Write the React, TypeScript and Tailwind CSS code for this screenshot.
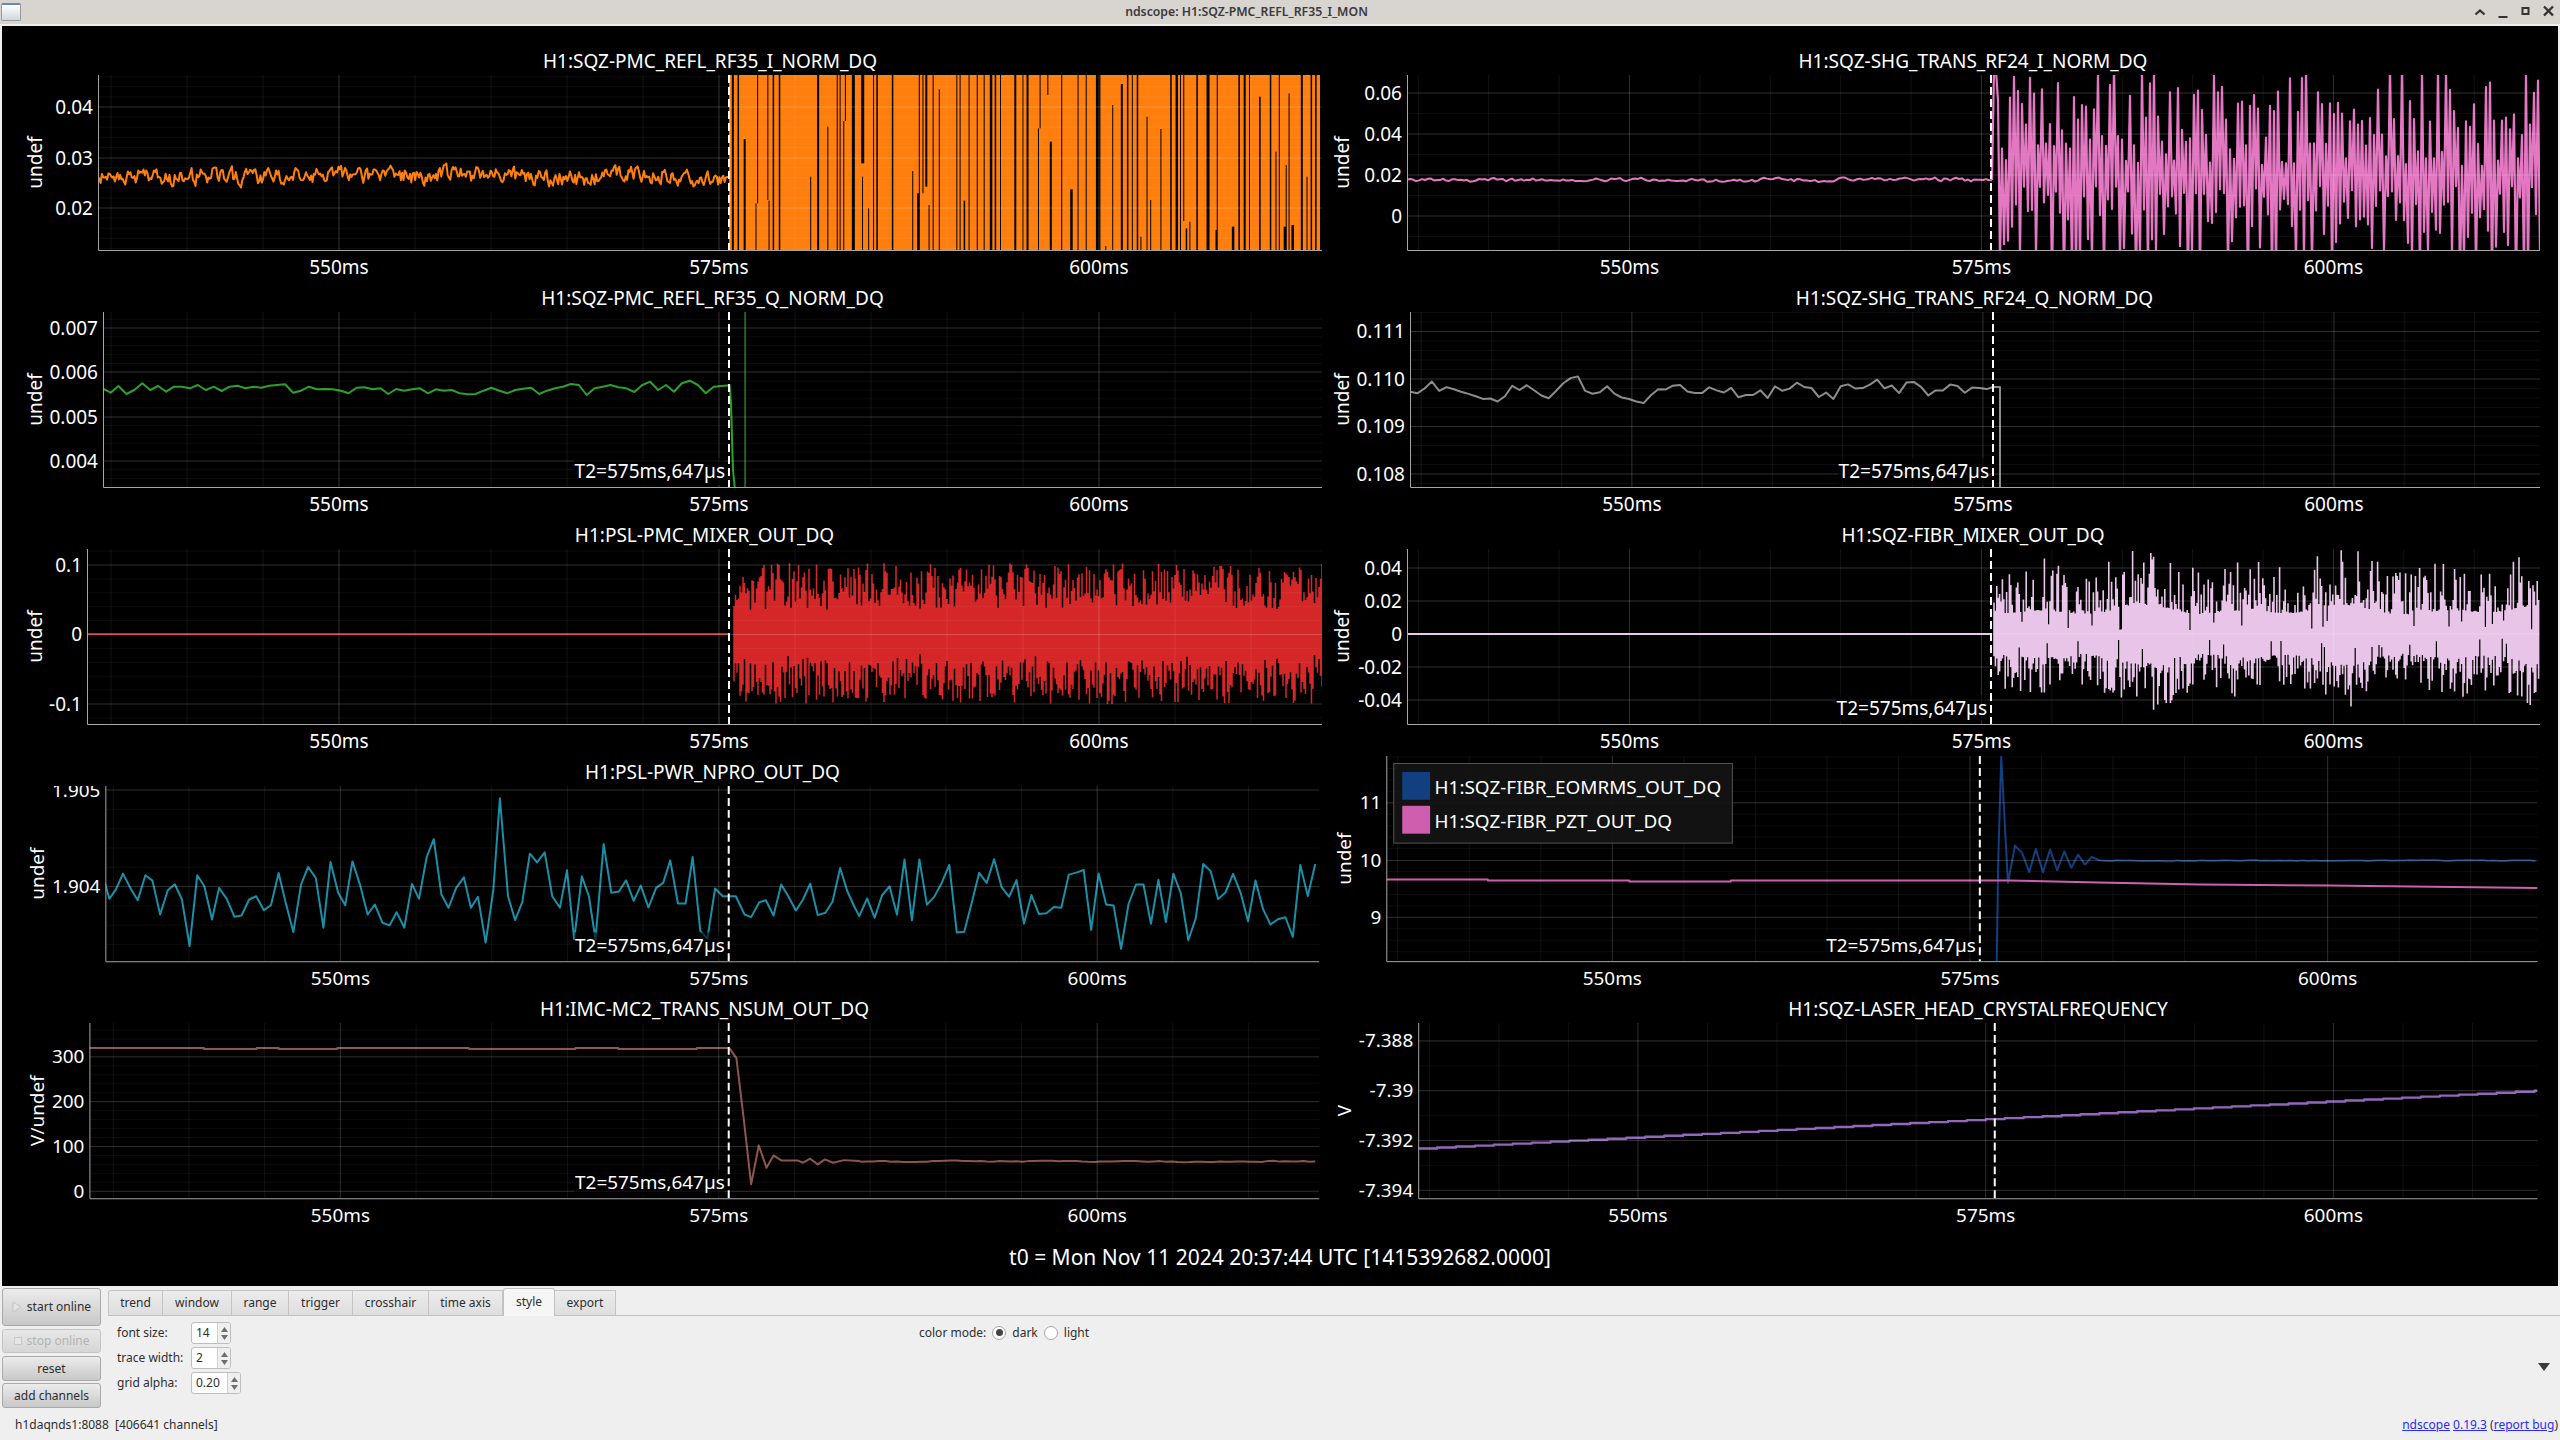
import { ReactNode } from 'react'

const RIGHT_EDGE = { left: 1322, right: 2540 }

// seeded so every run draws the same noise
function makeRandom(seed: number) {
  let a = seed
  return () => {
    a = (a + 0x6d2b79f5) | 0
    let t = Math.imul(a ^ (a >>> 15), 1 | a)
    t = (t + Math.imul(t ^ (t >>> 7), 61 | t)) ^ t
    return ((t ^ (t >>> 14)) >>> 0) / 4294967296
  }
}

function line(points: number[][]) {
  return points.map((p, i) => `${i ? 'L' : 'M'}${p[0].toFixed(1)} ${p[1].toFixed(1)}`).join('')
}

function noisy(x0: number, x1: number, step: number, cy: number, amp: number, seed: number) {
  const rand = makeRandom(seed)
  const pts: number[][] = []
  let v = 0
  let slow = 0
  for (let x = x0; x <= x1; x += step) {
    v = 0.45 * v + (rand() - 0.5) * 1.3
    slow = 0.97 * slow + (rand() - 0.5) * 0.16
    pts.push([x, cy + (v + slow) * amp])
  }
  return pts
}

function bars(
  x0: number,
  x1: number,
  step: number,
  cy: number,
  seed: number,
  amount: (rand: () => number, x: number) => [number, number],
) {
  const rand = makeRandom(seed)
  let d = ''
  for (let x = x0; x <= x1; x += step) {
    const [up, down] = amount(rand, x)
    d += `M${x.toFixed(1)} ${(cy - up).toFixed(1)}V${(cy + down).toFixed(1)}`
  }
  return d
}

// black gaps in the orange block, read off the reference: x, width, top, bottom
const ORANGE_GAPS = [
  [78, 2], [92, 1.5], [107, 2, 237], [136, 1, 430], [140, 1, 45, 430], [165, 1, 45, 420], [168, 1, 422], [178, 1.5],
  [193, 1.5], [270, 1, 350], [287, 2], [312, 1, 200], [335, 1], [342, 1], [351, 1, 183], [355, 1, 45, 183], [372, 3],
  [395, 3, 45, 310], [397, 1, 350], [412, 1, 445], [424, 1], [432, 1.5], [470, 1.5], [520, 1, 333], [532, 2, 400],
  [536, 1], [552, 2, 45, 380], [545, 1, 45, 400], [560, 1, 435], [570, 1], [585, 1, 88], [628, 1], [636, 1], [646, 1.5, 422],
  [658, 1], [678, 1], [695, 1], [710, 2.5], [722, 1.5], [735, 1], [770, 2], [790, 1], [800, 2], [828, 1, 205], [832, 1, 45, 205],
  [851, 1, 45, 105], [857, 2, 245], [885, 1], [907, 2.5, 388], [925, 1], [945, 1], [970, 4.5], [993, 1, 558], [1010, 1, 135],
  [1031, 2, 72], [1046, 1.5], [1058, 1], [1070, 1.5], [1079, 1, 530], [1094, 1, 170], [1103, 1, 420], [1128, 1, 207], [1152, 1.5],
  [1165, 2.5], [1176, 1], [1184, 1, 45, 483], [1190, 1.5, 505], [1199, 1, 485], [1216, 1.5], [1241, 3], [1263, 1.5, 510],
  [1266, 1], [1303, 2.5, 500], [1319, 1.5], [1332, 2], [1345, 1], [1370, 1.5, 110], [1396, 1.5], [1410, 1, 275], [1418, 1], [1430, 2.5, 500],
  [1435, 1, 315], [1442, 1, 100], [1449, 2.5, 495], [1472, 2], [1486, 1, 350], [1496, 1.5], [1507, 1.5],
]

const P2_Y = [
  1165, 1178, 1158, 1182, 1170, 1150, 1170, 1158, 1175, 1160, 1160, 1165, 1155, 1170, 1160, 1173, 1160, 1157, 1165, 1160, 1163,
  1157, 1155, 1153, 1178, 1172, 1160, 1168, 1167, 1168, 1172, 1180, 1163, 1162, 1168, 1165, 1182, 1167, 1172, 1168, 1165, 1180,
  1168, 1172, 1170, 1180, 1183, 1182, 1172, 1163, 1172, 1180, 1170, 1166, 1163, 1182, 1172, 1165, 1160, 1152, 1155, 1185, 1165,
  1160, 1155, 1162, 1165, 1176, 1155, 1145, 1170, 1155, 1175, 1150, 1142, 1155, 1180, 1160, 1158, 1156,
]

const P4_ZOOM = [
  [187, 430], [195, 478], [207, 450], [220, 402], [235, 450], [247, 482], [261, 407], [274, 423], [288, 525], [302, 452], [315, 434],
  [328, 480], [342, 620], [356, 407], [369, 440], [383, 540], [396, 445], [410, 478], [424, 532], [437, 528], [451, 480], [464, 470],
  [478, 512], [491, 497], [505, 400], [518, 490], [532, 578], [546, 435], [559, 382], [573, 415], [587, 565], [600, 367], [614, 460],
  [627, 497], [640, 365], [654, 435], [668, 525], [681, 495], [695, 550], [708, 558], [721, 518], [735, 565], [749, 433], [762, 478],
  [776, 352], [789, 298], [803, 465], [816, 505], [830, 445], [844, 413], [857, 505], [870, 472], [884, 610], [898, 452], [910, 175],
  [925, 470], [938, 542], [951, 488], [965, 342], [978, 368], [992, 338], [1006, 470], [1020, 505], [1033, 392], [1046, 600], [1060, 410],
  [1073, 470], [1085, 600], [1100, 313], [1114, 460], [1128, 456], [1141, 422], [1155, 484], [1168, 438], [1182, 504], [1196, 445],
  [1209, 430], [1222, 362], [1236, 492], [1250, 492], [1263, 352], [1277, 575], [1290, 597], [1304, 447], [1318, 470], [1330, 470],
  [1342, 470], [1358, 525], [1370, 533], [1385, 488], [1397, 482], [1411, 528], [1425, 435], [1438, 470], [1452, 513], [1465, 480],
  [1478, 432], [1492, 527], [1506, 520], [1519, 487], [1533, 385], [1546, 455], [1560, 505], [1568, 530],
]

function p4Points() {
  const pts = P4_ZOOM.map(([x, y]) => [x / 1.823, 740 + y / 3])
  const rand = makeRandom(44)
  for (let x = 868; x <= 1322; x += 7.5) {
    const r = rand()
    pts.push([x, 896 + (r - 0.5) * 74 + (rand() < 0.18 ? (rand() - 0.45) * 60 : 0)])
  }
  return pts
}

function Stroke({ d, color, width = 2 }: { d: string; color: string; width?: number }) {
  return <path d={d} fill="none" stroke={color} strokeWidth={width} strokeLinejoin="round" />
}

type Plot = {
  title?: string
  titleClass?: string
  left: number
  top: number
  height: number
  column: 'left' | 'right'
  unit: string
  ticks: [string, number][]
  spacing: number
  minors: number
  cursor: number
  t2?: boolean
  traces: ReactNode
  overlay?: ReactNode
}

const PLOTS: Plot[] = [
  {
    title: 'H1:SQZ-PMC_REFL_RF35_I_NORM_DQ',
    titleClass: 'ml-[96px] w-[1224px]',
    left: 98,
    top: 75,
    height: 175,
    column: 'left',
    unit: 'undef',
    ticks: [['0.04', 107], ['0.03', 158], ['0.02', 208]],
    spacing: 50.5,
    minors: 5,
    cursor: 729,
    traces: (
      <>
        <Stroke d={line(noisy(98, 729, 1.3, 177, 11, 11))} color="#ff7f0e" width={2} />
        <rect x={729} y={75} width={591} height={175} fill="#ff7f0e" />
        {ORANGE_GAPS.map(([x, w, y0 = 45, y1 = 570]) => (
          <rect key={`${x}-${y0}`} x={700 + x / 2.45} y={60 + y0 / 3} width={w} height={(y1 - y0) / 3} fill="#000" />
        ))}
      </>
    ),
  },
  {
    title: 'H1:SQZ-SHG_TRANS_RF24_I_NORM_DQ',
    titleClass: 'ml-[85px] w-[1132px]',
    left: 1407,
    top: 75,
    height: 175,
    column: 'right',
    unit: 'undef',
    ticks: [['0.06', 93], ['0.04', 134], ['0.02', 175], ['0', 216]],
    spacing: 41,
    minors: 2,
    cursor: 1991,
    traces: (() => {
      const rand = makeRandom(5)
      const pts: number[][] = [[1992, 180], [1994, 70], [1996, 70]]
      let sign = 1
      for (let x = 1998; x <= 2540; x += 2) {
        sign = -sign
        const r = rand()
        pts.push([x, 176 + sign * (10 + 100 * Math.pow(r, 1.15))])
      }
      return (
        <>
          <Stroke d={line(noisy(1407, 1992, 3, 180, 2.6, 21))} color="#e377c2" />
          <Stroke d={line(pts)} color="#e377c2" width={2.2} />
        </>
      )
    })(),
  },
  {
    title: 'H1:SQZ-PMC_REFL_RF35_Q_NORM_DQ',
    titleClass: 'ml-[101px] w-[1219px]',
    left: 103,
    top: 312,
    height: 175,
    column: 'left',
    unit: 'undef',
    ticks: [['0.007', 328], ['0.006', 372], ['0.005', 417], ['0.004', 461]],
    spacing: 44.3,
    minors: 5,
    cursor: 729,
    t2: true,
    traces: (() => {
      const step = (1330 - 187) / (P2_Y.length - 1)
      const pts = P2_Y.map((y, i) => [(187 + i * step) / 1.823, y / 3])
      pts.push([731, 404], [733, 470], [735, 490])
      return (
        <>
          <Stroke d={line(pts)} color="#2ca02c" />
          <rect x={744.5} y={312} width={1.2} height={175} fill="#2ca02c" />
        </>
      )
    })(),
  },
  {
    title: 'H1:SQZ-SHG_TRANS_RF24_Q_NORM_DQ',
    titleClass: 'ml-[88px] w-[1129px]',
    left: 1410,
    top: 312,
    height: 175,
    column: 'right',
    unit: 'undef',
    ticks: [['0.111', 331.5], ['0.110', 379], ['0.109', 426.5], ['0.108', 474]],
    spacing: 47.5,
    minors: 5,
    cursor: 1993,
    t2: true,
    traces: (
      <Stroke
        d={line([...noisy(1410, 1993, 7.3, 388, 13, 31), [1993, 387], [2000, 387], [2000, 490]])}
        color="#8c8c8c"
      />
    ),
  },
  {
    title: 'H1:PSL-PMC_MIXER_OUT_DQ',
    titleClass: 'ml-[85px] w-[1235px]',
    left: 87,
    top: 549,
    height: 175,
    column: 'left',
    unit: 'undef',
    ticks: [['0.1', 565], ['0', 634.5], ['-0.1', 704]],
    spacing: 69.5,
    minors: 5,
    cursor: 729,
    traces: (
      <>
        <Stroke d="M87 634H730" color="#d62728" />
        <Stroke
          d={bars(734, 1322, 1.5, 634, 3, (rand) => {
            const deep = rand() < 0.1
            return [
              deep ? 24 + rand() * 20 : 26 + 45 * Math.pow(rand(), 0.95),
              deep ? 20 + rand() * 20 : 24 + 46 * Math.pow(rand(), 0.85),
            ]
          })}
          color="#d62728"
          width={1.5}
        />
      </>
    ),
  },
  {
    title: 'H1:SQZ-FIBR_MIXER_OUT_DQ',
    titleClass: 'ml-[85px] w-[1132px]',
    left: 1407,
    top: 549,
    height: 175,
    column: 'right',
    unit: 'undef',
    ticks: [['0.04', 568], ['0.02', 601], ['0', 634], ['-0.02', 667], ['-0.04', 700]],
    spacing: 33,
    minors: 1,
    cursor: 1991,
    t2: true,
    traces: (
      <>
        <Stroke d="M1407 634H1992" color="#e8c4e8" />
        <Stroke
          d={bars(1994, 2540, 1.4, 634, 17, (rand, x) => {
            const env = 0.9 + 0.22 * Math.sin(x / 21) * Math.sin(x / 67 + 1)
            const a = rand()
            const b = rand()
            return [
              env * (a < 0.06 ? 4 + a * 200 : 26 + 58 * Math.pow(rand(), 2.4)),
              env * (b < 0.06 ? 4 + b * 200 : 26 + 46 * Math.pow(rand(), 2)),
            ]
          })}
          color="#e8c4e8"
          width={1.6}
        />
      </>
    ),
  },
  {
    title: 'H1:PSL-PWR_NPRO_OUT_DQ',
    titleClass: 'ml-[101px] w-[1219px]',
    left: 103,
    top: 786,
    height: 176,
    column: 'left',
    unit: 'undef',
    ticks: [['1.905', 790], ['1.904', 887]],
    spacing: 97,
    minors: 5,
    cursor: 729,
    t2: true,
    traces: <Stroke d={line(p4Points())} color="#1a8fa8" />,
  },
  {
    left: 1384,
    top: 756,
    height: 206,
    column: 'right',
    unit: 'undef',
    ticks: [['11', 803], ['10', 861], ['9', 918]],
    spacing: 57.5,
    minors: 5,
    cursor: 1980,
    t2: true,
    traces: (() => {
      const zoom = [
        [1366, 680], [1369, 360], [1375, 50], [1388, 430], [1402, 318], [1416, 340], [1430, 398], [1443, 328], [1457, 398],
        [1471, 330], [1485, 392], [1499, 335], [1513, 385], [1526, 345], [1540, 375], [1553, 352], [1568, 362],
      ]
      const blue = [...zoom.map(([x, y]) => [1300 + x / 1.96, 740 + y / 3]), ...noisy(2106, 2540, 6, 861, 0.8, 61)]
      return (
        <>
          <Stroke d={line(blue)} color="#123f80" />
          <Stroke d="M1384 880H1486V881H1628V882H1730V881H2010L2100 883L2200 885L2330 886L2540 888.5" color="#cf5fae" />
        </>
      )
    })(),
    overlay: (
      <>
        <rect x={1391.5} y={763.5} width={340} height={80} fill="#141414" fillOpacity={0.9} stroke="#555" />
        <rect x={1400} y={772} width={28} height={28} fill="#123f80" />
        <rect x={1400} y={806} width={28} height={28} fill="#cf5fae" />
        <text x={1432.5} y={794} fill="#fff">H1:SQZ-FIBR_EOMRMS_OUT_DQ</text>
        <text x={1432.5} y={828.5} fill="#fff">H1:SQZ-FIBR_PZT_OUT_DQ</text>
      </>
    ),
  },
  {
    title: 'H1:IMC-MC2_TRANS_NSUM_OUT_DQ',
    titleClass: 'ml-[85px] w-[1235px]',
    left: 87,
    top: 1023,
    height: 176,
    column: 'left',
    unit: 'V/undef',
    ticks: [['300', 1057], ['200', 1102], ['100', 1147], ['0', 1192]],
    spacing: 45,
    minors: 5,
    cursor: 729,
    t2: true,
    traces: (() => {
      const zoom = [
        [1330, 925], [1343, 955], [1356, 1130], [1370, 1335], [1384, 1218], [1398, 1285], [1411, 1248], [1425, 1263], [1455, 1263],
        [1465, 1270], [1478, 1258], [1492, 1275], [1505, 1260], [1520, 1270], [1540, 1262], [1568, 1265],
      ]
      const after = [...zoom.map(([x, y]) => [x / 1.823, 740 + y / 3]), ...noisy(862, 1322, 6, 1162, 0.9, 71)]
      return (
        <Stroke
          d={`M87 1048H202V1049H255V1048H277V1049H336V1048H468V1049H575V1048H618V1049H697V1048H729${line(after).replace('M', 'L')}`}
          color="#8c564b"
        />
      )
    })(),
  },
  {
    title: 'H1:SQZ-LASER_HEAD_CRYSTALFREQUENCY',
    titleClass: 'ml-[94px] w-[1124px]',
    left: 1416,
    top: 1023,
    height: 176,
    column: 'right',
    unit: 'V',
    ticks: [['-7.388', 1041], ['-7.39', 1091], ['-7.392', 1141], ['-7.394', 1191]],
    spacing: 50,
    minors: 2,
    cursor: 1995,
    traces: (() => {
      let d = 'M1416 1149'
      for (let i = 1; i <= 60; i++) {
        const x = 1416 + i * 19
        d += `H${Math.min(x, 2540)}V${(1149 - Math.min(i, 59) * 0.983).toFixed(1)}`
      }
      return <Stroke d={d} color="#9467bd" width={2.4} />
    })(),
  },
]

function PlotCell({ plot }: { plot: Plot }) {
  const cellX = plot.column === 'left' ? 2 : 1322
  const cellW = plot.column === 'left' ? 1320 : 1236
  const right = RIGHT_EDGE[plot.column]
  const bottom = plot.top + plot.height
  const svgHeight = plot.height + 36
  const xAt = (t: number) =>
    plot.column === 'left' ? 339 + (t - 550) * 15.2 : plot.left + ((t - 534.2) * (2539 - plot.left)) / 80.4

  const gridX: number[] = []
  for (let t = 535; t <= 615; t += 5) {
    const x = xAt(t)
    if (x > plot.left && x < right) gridX.push(t)
  }

  const minorY: number[] = []
  const minorStep = plot.spacing / plot.minors
  for (let i = -20; plot.minors > 1 && i < 60; i++) {
    const y = plot.ticks[0][1] + i * minorStep
    if (y > plot.top && y < bottom && i % plot.minors !== 0) minorY.push(y)
  }

  const clipId = `clip-${plot.column}-${plot.top}`

  return (
    <div className={plot.title ? 'flex flex-col' : '-mt-[4px] flex flex-col'}>
      {plot.title && (
        <div className={`flex h-[26px] items-start justify-center leading-[24px] text-white ${plot.titleClass}`}>
          {plot.title}
        </div>
      )}
      <svg
        width={cellW}
        height={svgHeight}
        viewBox={`${cellX} ${plot.top} ${cellW} ${svgHeight}`}
        className="block"
      >
        <defs>
          <clipPath id={clipId}>
            <rect x={plot.left} y={plot.top} width={right - plot.left} height={plot.height} />
          </clipPath>
        </defs>
        <g clipPath={`url(#${clipId})`}>{plot.traces}</g>

        {gridX.map((t) => (
          <line
            key={t}
            x1={xAt(t)}
            x2={xAt(t)}
            y1={plot.top}
            y2={bottom}
            stroke="#fff"
            strokeOpacity={t % 25 === 0 ? 0.19 : 0.07}
          />
        ))}
        {minorY.map((y) => (
          <line key={y} x1={plot.left} x2={right} y1={y} y2={y} stroke="#fff" strokeOpacity={0.05} />
        ))}
        {plot.ticks.map(([, y]) => (
          <line key={y} x1={plot.left} x2={right} y1={y} y2={y} stroke="#fff" strokeOpacity={0.19} />
        ))}

        {plot.t2 && (
          <g>
            <rect x={plot.cursor - 155} y={bottom - 29} width={151} height={27} fill="#000" fillOpacity={0.6} />
            <text x={plot.cursor - 4} y={bottom - 9.5} textAnchor="end" fill="#fff">
              T2=575ms,647µs
            </text>
          </g>
        )}

        <line
          x1={plot.cursor}
          x2={plot.cursor}
          y1={plot.top}
          y2={bottom}
          stroke="#fff"
          strokeWidth={2}
          strokeDasharray="8 4"
        />

        <path
          d={`M${plot.left + 0.5} ${plot.top}V${bottom + 0.5}H${right}`}
          fill="none"
          stroke="#a6a6a6"
          strokeWidth={1}
        />

        {plot.ticks.map(([label, y]) => (
          <text key={label} x={plot.left - 5} y={y + 6.6} textAnchor="end" fill="#fff">
            {label}
          </text>
        ))}
        {[550, 575, 600].map((t) => (
          <text key={t} x={xAt(t)} y={bottom + 23.5} textAnchor="middle" fill="#fff">
            {t}ms
          </text>
        ))}
        <text
          transform={`translate(${plot.column === 'left' ? 41.5 : 1348.5} ${(plot.top + bottom) / 2}) rotate(-90)`}
          textAnchor="middle"
          fill="#fff"
        >
          {plot.unit}
        </text>

        {plot.overlay}
      </svg>
    </div>
  )
}

function WindowButtons() {
  return (
    <div className="flex items-center gap-[7px] pr-[3px] text-[#333]">
      <svg width="16" height="16" viewBox="0 0 16 16" fill="none" stroke="currentColor" strokeWidth="2.2">
        <path d="M3.5 10.5L8 6.5l4.5 4" />
      </svg>
      <svg width="16" height="16" viewBox="0 0 16 16" fill="currentColor">
        <rect x="3.5" y="12" width="9" height="2" />
      </svg>
      <svg width="16" height="16" viewBox="0 0 16 16" fill="none" stroke="currentColor" strokeWidth="2">
        <rect x="4.5" y="4" width="6" height="6" />
      </svg>
      <svg width="16" height="16" viewBox="0 0 16 16" fill="none" stroke="currentColor" strokeWidth="2.4">
        <path d="M3 2.5l9 9M12 2.5l-9 9" />
      </svg>
    </div>
  )
}

function TitleBar() {
  return (
    <div className="flex h-[24px] items-center justify-between bg-[#d8d5d1]">
      <div className="ml-[1px] h-[18px] w-[20px] rounded-[2px] border border-[#9a9a9a] border-t-[2px] border-t-[#6c87b5] bg-gradient-to-b from-white to-[#d2d7de]" />
      <div className="text-[12.25px] font-semibold text-[#3a3a3a]">ndscope: H1:SQZ-PMC_REFL_RF35_I_MON</div>
      <WindowButtons />
    </div>
  )
}

function SideButton({ label, height, disabled, icon }: { label: string; height: string; disabled?: boolean; icon?: ReactNode }) {
  return (
    <button
      type="button"
      className={`flex w-[99px] items-center justify-center gap-[5px] rounded-[3px] border bg-gradient-to-b ${height} ${
        disabled
          ? 'border-[#c4c4c4] from-[#e8e8e8] to-[#d6d6d6] text-[#b2b2b2]'
          : 'border-[#a8a8a8] from-[#ececec] to-[#c8c8c8] text-[#2e2e2e]'
      }`}
    >
      {icon}
      {label}
    </button>
  )
}

const TABS = [
  { label: 'trend', w: 'w-[55px]' },
  { label: 'window', w: 'w-[69px]' },
  { label: 'range', w: 'w-[57px]' },
  { label: 'trigger', w: 'w-[64px]' },
  { label: 'crosshair', w: 'w-[76px]' },
  { label: 'time axis', w: 'w-[74px]' },
  { label: 'style', w: 'w-[52px]', active: true },
  { label: 'export', w: 'w-[61px]' },
]

function Tabs() {
  return (
    <div className="flex h-[28px] items-end border-b border-[#c0c0c0]">
      {TABS.map((tab) =>
        tab.active ? (
          <div
            key={tab.label}
            className={`-mb-px flex h-[28px] items-center justify-center rounded-t-[3px] border border-b-0 border-[#c0c0c0] bg-[#f6f6f6] pb-[2px] ${tab.w}`}
          >
            {tab.label}
          </div>
        ) : (
          <div
            key={tab.label}
            className={`flex h-[25px] items-center justify-center border border-b-0 border-l-0 border-[#c4c4c4] bg-gradient-to-b from-[#ececec] to-[#dedede] first:rounded-tl-[3px] first:border-l ${tab.w}`}
          >
            {tab.label}
          </div>
        ),
      )}
    </div>
  )
}

function Spin({ label, value, w }: { label: string; value: string; w: string }) {
  return (
    <div className="flex h-[22px] items-center">
      <div className="w-[74px]">{label}</div>
      <div className={`flex h-[22px] overflow-hidden rounded-[3px] border border-[#bdbdbd] bg-white ${w}`}>
        <div className="flex flex-1 items-center pl-[4px]">{value}</div>
        <div className="flex w-[13px] flex-col items-center justify-center gap-[3px] border-l border-[#d0d0d0] bg-[#efefef]">
          <svg width="7" height="5" viewBox="0 0 7 5">
            <path d="M3.5 0L7 5H0z" fill="#6e6e6e" />
          </svg>
          <svg width="7" height="5" viewBox="0 0 7 5">
            <path d="M0 0h7L3.5 5z" fill="#6e6e6e" />
          </svg>
        </div>
      </div>
    </div>
  )
}

function Radio({ checked, label }: { checked?: boolean; label: string }) {
  return (
    <div className="flex items-center gap-[6px]">
      <div className="flex h-[14px] w-[14px] items-center justify-center rounded-full border border-[#a6a6a6] bg-white">
        {checked && <div className="h-[7px] w-[7px] rounded-full bg-[#444]" />}
      </div>
      {label}
    </div>
  )
}

function ControlPanel() {
  return (
    <div className="flex h-[154px] flex-col bg-[#efefef] text-[12px] text-[#2e2e2e]">
      <div className="flex h-[124px]">
        <div className="ml-[2px] flex flex-col pt-[2px]">
          <SideButton
            label="start online"
            height="h-[38px]"
            icon={
              <svg width="10" height="12" viewBox="0 0 10 12" fill="#e4e4e4" stroke="#c4c4c4">
                <path d="M1 1l8 5-8 5z" />
              </svg>
            }
          />
          <div className="mt-[3px]">
            <SideButton
              label="stop online"
              height="h-[24px]"
              disabled
              icon={<div className="h-[8px] w-[8px] border border-[#c8c8c8] bg-[#e6e6e6]" />}
            />
          </div>
          <div className="mt-[3px]">
            <SideButton label="reset" height="h-[25px]" />
          </div>
          <div className="mt-[2px]">
            <SideButton label="add channels" height="h-[25px]" />
          </div>
        </div>
        <div className="ml-[7px] flex flex-1 flex-col pt-[2px]">
          <Tabs />
          <div className="flex flex-1 pr-[10px]">
            <div className="ml-[9px] flex flex-col gap-[3px] pt-[6px]">
              <Spin label="font size:" value="14" w="w-[40px]" />
              <Spin label="trace width:" value="2" w="w-[40px]" />
              <Spin label="grid alpha:" value="0.20" w="w-[50px]" />
            </div>
            <div className="ml-[678px] flex h-[22px] items-center gap-[6px] self-start pt-[11px]">
              <span>color mode:</span>
              <Radio checked label="dark" />
              <Radio label="light" />
            </div>
            <div className="ml-auto mt-[47px] h-0 w-0 border-x-[6px] border-t-[8px] border-x-transparent border-t-[#3a3a3a]" />
          </div>
        </div>
      </div>
      <div className="flex flex-1 items-start justify-between pl-[15px] pr-[2px] pt-[6px]">
        <span className="whitespace-pre">h1daqnds1:8088  [406641 channels]</span>
        <span>
          <span className="text-[#2a2aff] underline">ndscope</span> <span className="text-[#2a2aff] underline">0.19.3</span> (
          <span className="text-[#2a2aff] underline">report bug</span>)
        </span>
      </div>
    </div>
  )
}

export default function App() {
  return (
    <div className="flex h-[1440px] w-[2560px] flex-col overflow-hidden bg-[#efefef] font-['Noto_Sans',sans-serif]">
      <TitleBar />
      <div className="mx-[2px] mt-[2px] flex h-[1260px] flex-col bg-black text-[19px]">
        <div className="grid grid-cols-[1320px_1236px] grid-rows-[repeat(5,237px)] pt-[23px]">
          {PLOTS.map((plot) => (
            <PlotCell key={`${plot.column}-${plot.top}`} plot={plot} />
          ))}
        </div>
        <div className="flex h-[48px] items-center justify-center text-[21px] text-white">
          t0 = Mon Nov 11 2024 20:37:44 UTC [1415392682.0000]
        </div>
      </div>
      <ControlPanel />
    </div>
  )
}
